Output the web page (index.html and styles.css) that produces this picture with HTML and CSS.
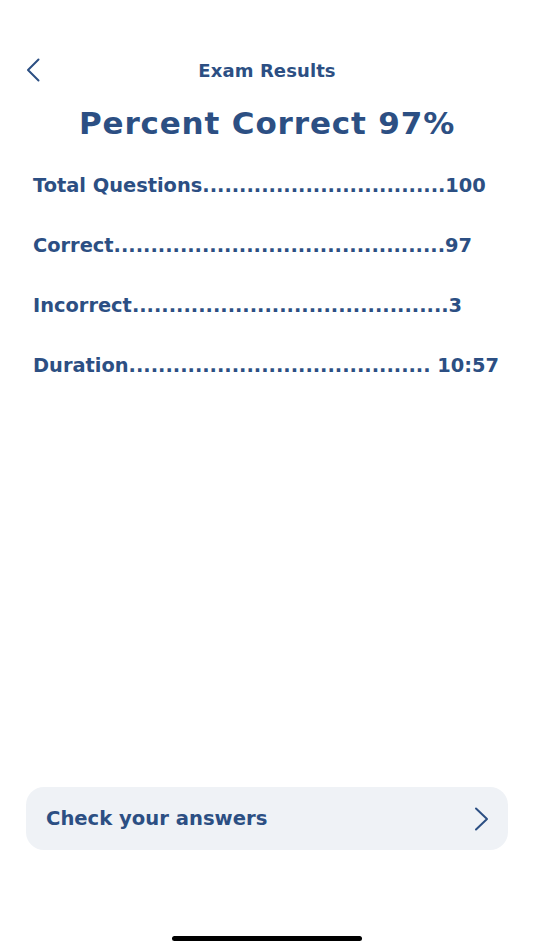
FILE: index.html
```html
<!DOCTYPE html>
<html lang="en">
<head>
<meta charset="utf-8">
<title>Exam Results</title>
<link rel="stylesheet" href="styles.css">
</head>
<body>
<div class="screen">
  <header class="nav">
    <button class="back" aria-label="Back">
      <svg width="14" height="24" viewBox="0 0 14 24"><path d="M12.5 1.5 L2 12 L12.5 22.5" fill="none" stroke="#2c4f83" stroke-width="2" stroke-linecap="round" stroke-linejoin="round"/></svg>
    </button>
    <div class="nav-title">Exam Results</div>
  </header>
  <h1 class="headline">Percent Correct 97%</h1>
  <ul class="stats">
    <li class="stat">Total Questions.................................100</li>
    <li class="stat">Correct.............................................97</li>
    <li class="stat">Incorrect...........................................3</li>
    <li class="stat">Duration......................................... 10:57</li>
  </ul>
  <div class="spacer"></div>
  <button class="check">
    <span class="check-label">Check your answers</span>
    <svg width="16" height="24" viewBox="0 0 16 24"><path d="M2 1.5 L13 12 L2 22.5" fill="none" stroke="#2c4f83" stroke-width="2" stroke-linecap="round" stroke-linejoin="round"/></svg>
  </button>
  <div class="home-bar"><span class="home-indicator"></span></div>
</div>
</body>
</html>
```

FILE: styles.css
```css
* { box-sizing: border-box; }
html, body { margin: 0; padding: 0; background: #ffffff; }
body {
  font-family: "DejaVu Sans", "Liberation Sans", sans-serif;
  color: #2c4f83;
}
.screen {
  width: 534px;
  height: 950px;
  display: flex;
  flex-direction: column;
}
.nav {
  position: relative;
  height: 40px;
  margin-top: 50px;
  display: flex;
  align-items: center;
  justify-content: center;
}
.back {
  position: absolute;
  left: 24px;
  top: 8px;
  border: 0;
  background: none;
  padding: 0;
  width: 18px;
  height: 24px;
  display: flex;
  align-items: center;
  justify-content: center;
}
.nav-title {
  font-size: 18px;
  font-weight: 700;
  letter-spacing: 0.1px;
}
.headline {
  margin: 12px 0 0;
  text-align: center;
  font-size: 31px;
  font-weight: 700;
  letter-spacing: 0.85px;
  line-height: 42px;
}
.stats {
  list-style: none;
  margin: 30px 0 0;
  padding: 0 0 0 33px;
  display: flex;
  flex-direction: column;
  gap: 36px;
}
.stat {
  font-size: 19.4px;
  font-weight: 700;
  line-height: 24px;
  white-space: nowrap;
}
.spacer { flex: 1; }
.check {
  margin: 0 26px;
  height: 63px;
  border: 0;
  border-radius: 18px;
  background: #eff2f6;
  display: flex;
  align-items: center;
  justify-content: space-between;
  padding: 0 18px 0 20px;
  font-family: inherit;
  color: inherit;
}
.check-label {
  font-size: 19.6px;
  font-weight: 700;
}
.home-bar {
  height: 100px;
  display: flex;
  justify-content: center;
  align-items: flex-end;
  padding-bottom: 9px;
}
.home-indicator {
  width: 190px;
  height: 5px;
  border-radius: 3px;
  background: #000000;
}
```
